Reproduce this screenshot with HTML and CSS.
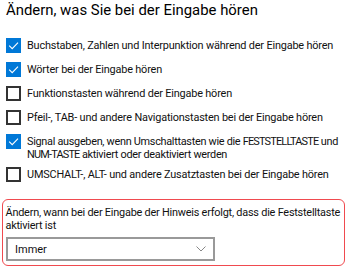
FILE: index.html
```html
<!DOCTYPE html>
<html lang="de">
<head>
<meta charset="utf-8">
<title>Eingabe</title>
<link rel="stylesheet" href="styles.css">
</head>
<body>
<h1 class="title">Ändern, was Sie bei der Eingabe hören</h1>
<div class="list">
  <div class="row"><span class="box checked"><svg viewBox="0 0 15 15" width="15" height="15"><path d="M3.2 7.6 L6.2 10.6 L12 4.6" fill="none" stroke="#fff" stroke-width="1.1"/></svg></span><span class="label">Buchstaben, Zahlen und Interpunktion während der Eingabe hören</span></div>
  <div class="row"><span class="box checked"><svg viewBox="0 0 15 15" width="15" height="15"><path d="M3.2 7.6 L6.2 10.6 L12 4.6" fill="none" stroke="#fff" stroke-width="1.1"/></svg></span><span class="label">Wörter bei der Eingabe hören</span></div>
  <div class="row"><span class="box"></span><span class="label">Funktionstasten während der Eingabe hören</span></div>
  <div class="row"><span class="box"></span><span class="label">Pfeil-, TAB- und andere Navigationstasten bei der Eingabe hören</span></div>
  <div class="row"><span class="box checked"><svg viewBox="0 0 15 15" width="15" height="15"><path d="M3.2 7.6 L6.2 10.6 L12 4.6" fill="none" stroke="#fff" stroke-width="1.1"/></svg></span><span class="label nowrap">Signal ausgeben, wenn Umschalttasten wie die <span class="caps">FESTSTELLTASTE</span> und<br><span class="caps">NUM-TASTE</span> aktiviert oder deaktiviert werden</span></div>
  <div class="row"><span class="box"></span><span class="label">UMSCHALT-, ALT- und andere Zusatztasten bei der Eingabe hören</span></div>
</div>
<div class="highlight">
  <div class="hint">Ändern, wann bei der Eingabe der Hinweis erfolgt, dass die Feststelltaste<br>aktiviert ist</div>
  <div class="select"><span class="value">Immer</span><svg class="chev" viewBox="0 0 10 6" width="10" height="6"><path d="M0.5 0.5 L5 5 L9.5 0.5" fill="none" stroke="#888" stroke-width="1"/></svg></div>
</div>
</body>
</html>
```
FILE: styles.css
```css
html, body {
  margin: 0;
  padding: 0;
  background: #fff;
}
body {
  font-family: Roboto, "Noto Sans", sans-serif;
  color: #111;
  width: 347px;
  height: 272px;
  overflow: hidden;
}
.title {
  margin: 0;
  padding: 0 0 0 6px;
  font-size: 14.9px;
  font-weight: 400;
  line-height: 20px;
  color: #000;
}
.list {
  padding: 18px 0 0 6px;
}
.row {
  display: flex;
  align-items: flex-start;
  min-height: 24px;
  box-sizing: border-box;
  padding-bottom: 6px;
}
.box {
  flex: none;
  width: 15px;
  height: 15px;
  box-sizing: border-box;
  border: 2px solid #333;
  background: #fff;
}
.box.checked {
  border: none;
  background: #0078d7;
}
.box svg {
  display: block;
}
.label {
  flex: 1;
  padding: 1px 0 0 6px;
  font-size: 10.9px;
  line-height: 13px;
  letter-spacing: -0.18px;
}
.nowrap {
  white-space: nowrap;
  letter-spacing: -0.3px;
}
.caps {
  letter-spacing: -0.8px;
}
.highlight {
  margin: 8px 2px 0 2px;
  border: 1.5px solid #f04a4f;
  border-radius: 6px;
  padding: 6px 0 4px 2.5px;
}
.hint {
  font-size: 10.9px;
  line-height: 13px;
  letter-spacing: -0.22px;
  white-space: nowrap;
}
.select {
  margin: 5px 0 0 0.5px;
  width: 209px;
  height: 24px;
  box-sizing: border-box;
  border: 2px solid #999;
  display: flex;
  align-items: center;
  justify-content: space-between;
  padding: 0 7px;
  font-size: 11px;
}
.chev {
  display: block;
}
```
